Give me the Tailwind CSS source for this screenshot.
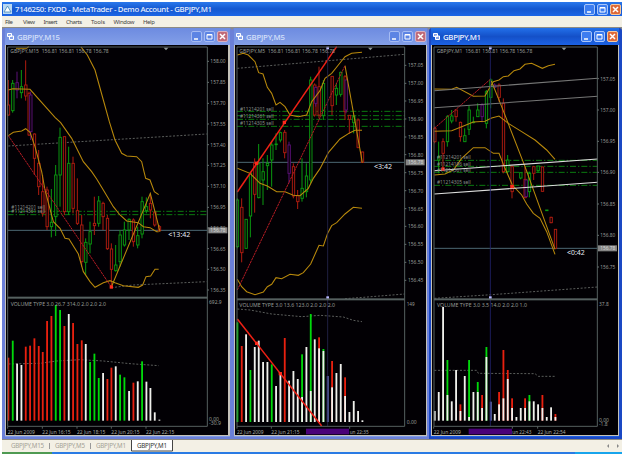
<!DOCTYPE html>
<html lang="en">

<head>
	<meta charset="UTF-8">
	<meta name="viewport" content="width=device-width, initial-scale=1.0">
	<title>7146250: FXDD - MetaTrader</title>
	<script src="https://cdn.jsdelivr.net/npm/@tailwindcss/browser@4"></script>
</head>

<body class="h-[454px] w-[625px] overflow-hidden bg-white pt-[2px] pr-[3px] pl-[2px] font-['Noto_Sans','Liberation_Sans',sans-serif]">
	<div class="flex h-[452px] flex-col">
		<!-- title bar -->
		<header class="flex h-[14px] shrink-0 items-center bg-linear-to-b from-[#2a78ec] via-[#1457d0] to-[#1c66e6] pl-[1px]">
			<svg class="mr-[3px] h-[10px] w-[9px]" viewBox="0 0 9 10">
				<rect width="9" height="10" fill="#b9d8f2" />
				<path d="M1 8 4.500 2 8 8Z" fill="#fff" stroke="#3f86b8" stroke-width=".8" />
			</svg>
			<svg class="h-[14px] w-[210px]" viewBox="0 0 210 14">
				<text x="0" y="10" font-size="7.800" font-weight="500" fill="#e8f0ff" textLength="197" xml:space="preserve">7146250: FXDD - MetaTrader - Demo Account - GBPJPY,M1</text>
			</svg>
			<div class="mr-[1px] ml-auto flex gap-[2px]">
				<svg class="size-[11px]" viewBox="0 0 11 11"><rect x=".5" y=".5" width="10" height="10" rx="1.500" fill="#3d7df0" stroke="#a9c6fa" /><path d="M3 8h4" stroke="#fff" stroke-width="1.500" /></svg>
				<svg class="size-[11px]" viewBox="0 0 11 11"><rect x=".5" y=".5" width="10" height="10" rx="1.500" fill="#3d7df0" stroke="#a9c6fa" /><path d="M3 3.500h5v4.500h-5zM3 4h5" fill="none" stroke="#fff" /></svg>
				<svg class="size-[11px]" viewBox="0 0 11 11"><rect x=".5" y=".5" width="10" height="10" rx="1.500" fill="#de6a38" stroke="#f3c9a0" /><path d="M3 3l5 5M8 3l-5 5" stroke="#fff" stroke-width="1.500" /></svg>
			</div>
		</header>
		<!-- menu -->
		<nav class="h-[11px] shrink-0 bg-[#f3f0e5]">
			<svg class="h-[11px] w-[200px] fill-[#444]" viewBox="2 16 200 11" font-size="6">
				<text x="5" y="23.500" textLength="8">File</text>
				<text x="23" y="23.500" textLength="12">View</text>
				<text x="43.500" y="23.500" textLength="14">Insert</text>
				<text x="66" y="23.500" textLength="16">Charts</text>
				<text x="91" y="23.500" textLength="14">Tools</text>
				<text x="113.500" y="23.500" textLength="21">Window</text>
				<text x="143" y="23.500" textLength="12">Help</text>
			</svg>
		</nav>
		<!-- chart windows -->
		<main class="flex h-[413px] shrink-0 border-t border-b border-[#8c8a84] bg-[#8c8a84]">
			<section class="flex w-[230px] flex-col rounded-t-[3px] border-r-[2px] border-b-[2px] border-l-[3px] border-[#6b80d8] bg-[#7e99e4] pb-px">
				<div class="flex h-[17px] shrink-0 items-center bg-linear-to-b from-[#6d8be0] to-[#839fe8] pl-[2px]">
					<svg class="mr-[3px] size-[7px]" viewBox="0 0 7 7"><path d="M.5.5h4v3h-4zM2.500 3h4v3.500h-4z" fill="#8aa4e8" stroke="#fff" /></svg>
					<svg class="h-[14px] w-[60px]" viewBox="0 0 60 14"><text y="10" font-size="7.800" font-weight="500" fill="#d6e0fa" textLength="43">GBPJPY,M15</text></svg>
					<div class="mr-[2px] ml-auto flex gap-[2px]">
						<svg class="size-[11px]" viewBox="0 0 11 11"><rect x=".5" y=".5" width="10" height="10" rx="1.500" fill="#5c84e4" stroke="#a5bbf2" /><path d="M3 8h4" stroke="#fff" stroke-width="1.500" /></svg>
						<svg class="size-[11px]" viewBox="0 0 11 11"><rect x=".5" y=".5" width="10" height="10" rx="1.500" fill="#5c84e4" stroke="#a5bbf2" /><path d="M3 3.500h5v4.500h-5zM3 4h5" fill="none" stroke="#fff" /></svg>
						<svg class="size-[11px]" viewBox="0 0 11 11"><rect x=".5" y=".5" width="10" height="10" rx="1.500" fill="#c06a78" stroke="#d9b0c0" /><path d="M3 3l5 5M8 3l-5 5" stroke="#fff" stroke-width="1.500" /></svg>
					</div>
				</div>
				<div class="min-h-0 grow border-r-[2px] border-b border-l border-[#c4c2ba]">
					<svg id="m15" class="h-full w-full bg-[#020004]" viewBox="18 135 666 1170" preserveAspectRatio="none"></svg>
				</div>
			</section>
			<section class="flex w-[197px] flex-col rounded-t-[3px] border-x-[2px] border-b-[2px] border-[#6b80d8] bg-[#7e99e4] pb-px">
				<div class="flex h-[17px] shrink-0 items-center bg-linear-to-b from-[#6d8be0] to-[#839fe8] pl-[2px]">
					<svg class="mr-[3px] size-[7px]" viewBox="0 0 7 7"><path d="M.5.5h4v3h-4zM2.500 3h4v3.500h-4z" fill="#8aa4e8" stroke="#fff" /></svg>
					<svg class="h-[14px] w-[60px]" viewBox="0 0 60 14"><text y="10" font-size="7.800" font-weight="500" fill="#d6e0fa" textLength="39">GBPJPY,M5</text></svg>
					<div class="mr-px ml-auto flex gap-[2px]">
						<svg class="size-[11px]" viewBox="0 0 11 11"><rect x=".5" y=".5" width="10" height="10" rx="1.500" fill="#5c84e4" stroke="#a5bbf2" /><path d="M3 8h4" stroke="#fff" stroke-width="1.500" /></svg>
						<svg class="size-[11px]" viewBox="0 0 11 11"><rect x=".5" y=".5" width="10" height="10" rx="1.500" fill="#5c84e4" stroke="#a5bbf2" /><path d="M3 3.500h5v4.500h-5zM3 4h5" fill="none" stroke="#fff" /></svg>
						<svg class="size-[11px]" viewBox="0 0 11 11"><rect x=".5" y=".5" width="10" height="10" rx="1.500" fill="#c06a78" stroke="#d9b0c0" /><path d="M3 3l5 5M8 3l-5 5" stroke="#fff" stroke-width="1.500" /></svg>
					</div>
				</div>
				<div class="min-h-0 grow border-x border-b border-[#c4c2ba]">
					<svg id="m5" class="h-full w-full bg-[#020004]" viewBox="15 135 573 1170" preserveAspectRatio="none"></svg>
				</div>
			</section>
			<section class="flex w-[193px] flex-col rounded-t-[3px] border-r-[3px] border-b-[2px] border-l-[2px] border-[#1a48c4] bg-[#1c5ce0] pb-px">
				<div class="flex h-[17px] shrink-0 items-center bg-linear-to-b from-[#2370ea] via-[#1450c8] to-[#1c62e4] pl-[2px]">
					<svg class="mr-[3px] size-[7px]" viewBox="0 0 7 7"><path d="M.5.5h4v3h-4zM2.500 3h4v3.500h-4z" fill="#8aa4e8" stroke="#fff" /></svg>
					<svg class="h-[14px] w-[60px]" viewBox="0 0 60 14"><text y="10" font-size="7.800" font-weight="500" fill="#f2f6ff" textLength="38">GBPJPY,M1</text></svg>
					<div class="mr-px ml-auto flex gap-[2px]">
						<svg class="size-[11px]" viewBox="0 0 11 11"><rect x=".5" y=".5" width="10" height="10" rx="1.500" fill="#3d7df0" stroke="#a9c6fa" /><path d="M3 8h4" stroke="#fff" stroke-width="1.500" /></svg>
						<svg class="size-[11px]" viewBox="0 0 11 11"><rect x=".5" y=".5" width="10" height="10" rx="1.500" fill="#3d7df0" stroke="#a9c6fa" /><path d="M3 3.500h5v4.500h-5zM3 4h5" fill="none" stroke="#fff" /></svg>
						<svg class="size-[11px]" viewBox="0 0 11 11"><rect x=".5" y=".5" width="10" height="10" rx="1.500" fill="#de6a38" stroke="#f3c9a0" /><path d="M3 3l5 5M8 3l-5 5" stroke="#fff" stroke-width="1.500" /></svg>
					</div>
				</div>
				<div class="min-h-0 grow border-x border-b border-[#c4c2ba]">
					<svg id="m1" class="h-full w-full bg-[#020004]" viewBox="21 135 558 1170" preserveAspectRatio="none"></svg>
				</div>
			</section>
		</main>
		<!-- tabs -->
		<footer class="h-[12px] shrink-0 bg-[#f3f0e5]">
			<svg class="h-[12px] w-full" viewBox="2 440 620 12" font-size="6.200">
				<path d="M49.500 443v6M90.500 443v6" stroke="#999" />
				<path d="M131.500 440v11h41v-11" fill="#fff" stroke="#444" />
				<g fill="#a3a196">
					<text x="11" y="448" textLength="33">GBPJPY,M15</text>
					<text x="55" y="448" textLength="30">GBPJPY,M5</text>
					<text x="96" y="448" textLength="30">GBPJPY,M1</text>
				</g>
				<text x="137" y="448" textLength="30" fill="#333">GBPJPY,M1</text>
				<path d="M609 444l-2 2 2 2zM617 444l2 2-2 2z" fill="#888" />
			</svg>
		</footer>
		<div class="flex h-[2px]">
			<div class="w-[50px] bg-[#4f9a52]"></div>
			<div class="w-[523px] bg-[#2a7be4]"></div>
			<div class="grow bg-[#18a5ec]"></div>
		</div>
	</div>

	<script>
		// chart units are thirds of a pixel
		const C = { r: '#b01c10', g: '#0a9a10', p: '#5c1078' }
		const V = { r: '#e8200f', g: '#00d80a', w: '#f0f0ec', b: '#7080d0' }
		const YELLOW = '#b8880c'

		const charts = {
			m15: {
				l: 23, r: 622, w: 684, div: 894, base: 1262, price: 691, priceX: 625,
				head: ['GBPJPY,M15  156.81 156.81 156.78 156.78', 31, 154, 295],
				vol: ['VOLUME TYPE 3.0 26.7 314.0 2.0 2.0 2.0', 32, 912, 286],
				tri: 498, timer: ['<13:42', 505, 703, 66],
				axisX: 631, axisW: 46,
				axis: [['158.00', 184], ['157.85', 247], ['157.70', 310], ['157.55', 372], ['157.40', 434], ['157.25', 496], ['157.10', 559], ['156.95', 622], ['156.80', 684], ['156.65', 746], ['156.50', 808], ['156.35', 870]],
				volAxis: [['692.9', 906, 38], ['0.00', 1258, 30], ['-30.9', 1270, 36]],
				dates: [['22 Jun 2009', 23, 82], ['22 Jun 16:15', 127, 85], ['22 Jun 18:15', 231, 85], ['22 Jun 20:15', 334, 85], ['22 Jun 22:15', 438, 85]],
				orders: [634, 644],
				labels: [['#11214201 sell', 34, 622], ['#11214361 sell', 34, 634]],
				candles: [[25, 240, 347, 315, 345, 'r'], [38, 240, 338, 250, 332, 'g'], [51, 215, 295, 248, 270, 'p'], [64, 210, 295, 260, 278, 'g'], [77, 181, 302, 255, 288, 'r'], [87, 275, 408, 280, 405, 'r'], [92, 275, 420, 285, 395, 'p'], [103, 400, 525, 402, 475, 'r'], [116, 450, 585, 490, 560, 'r'], [128, 525, 650, 575, 640, 'r'], [141, 560, 690, 570, 680, 'r'], [154, 567, 712, 667, 680, 'g'], [167, 495, 708, 525, 650, 'g'], [180, 383, 620, 412, 525, 'g'], [193, 410, 645, 410, 635, 'r'], [206, 440, 645, 490, 635, 'g'], [219, 470, 640, 490, 625, 'r'], [232, 535, 675, 632, 670, 'r'], [245, 645, 800, 675, 785, 'r'], [257, 715, 825, 727, 787, 'g'], [270, 665, 760, 695, 732, 'g'], [283, 590, 705, 670, 677, 'r'], [296, 588, 680, 603, 670, 'g'], [309, 605, 690, 610, 650, 'r'], [322, 645, 750, 655, 746, 'r'], [334, 730, 855, 747, 808, 'r'], [347, 735, 815, 795, 812, 'g'], [360, 690, 800, 705, 785, 'g'], [373, 665, 740, 690, 735, 'g'], [387, 655, 720, 658, 690, 'g'], [400, 655, 740, 660, 725, 'r'], [413, 680, 745, 707, 735, 'g'], [426, 590, 715, 605, 702, 'g'], [439, 592, 640, 620, 632, 'g'], [451, 580, 655, 610, 630, 'r'], [464, 635, 680, 636, 675, 'r'], [478, 675, 695, 680, 692, 'r']],
				bands: ['48,145 80,145 86,140', '243,141 262,165 285,210 310,300 328,365 345,420 365,460 380,468 410,470 425,485 432,515 437,535 450,540 463,575 476,584', '25,270 38,266 90,268 165,352 182,368 215,415 250,485 275,515 290,537 310,570 340,620 360,645 380,663 415,668 430,680 450,683 470,695 476,695', '25,407 40,397 65,393 77,386 90,397 105,440 125,515 135,570 160,665 180,685 195,715 207,717 235,762 250,815 270,845 285,862 310,848 330,842 345,848 370,857 415,862 428,855 438,830 452,828 465,808 476,808', '334,861 451,580 480,695'],
				red: ['25,407 334,861'], line: [], white: [],
				dash: ['25,438 620,402', '334,863 400,855 620,845', '25,1092 120,1090 170,1083 240,1079 310,1083 390,1091 476,1097'],
				dots: [[334, 861]],
				bars: [[25, 188, 'r'], [38, 137, 'g'], [51, 206, 'w'], [64, 210, 'w'], [77, 155, 'r'], [90, 152, 'r'], [103, 130, 'r'], [116, 153, 'r'], [128, 171, 'r'], [141, 78, 'r'], [154, 63, 'r'], [167, 30, 'g'], [180, 45, 'g'], [193, 93, 'r'], [206, 57, 'w'], [219, 84, 'r'], [232, 147, 'r'], [245, 136, 'r'], [257, 147, 'w'], [270, 201, 'g'], [283, 176, 'g'], [296, 249, 'g'], [309, 234, 'w'], [322, 252, 'r'], [334, 218, 'r'], [347, 214, 'w'], [360, 239, 'g'], [373, 247, 'g'], [387, 288, 'w'], [400, 263, 'r'], [413, 259, 'w'], [426, 199, 'g'], [439, 260, 'w'], [451, 279, 'w'], [464, 352, 'w'], [478, 374, 'w']]
			},
			m5: {
				l: 21, r: 524, w: 588, div: 899, base: 1266, price: 487, priceX: 527, cross: 293,
				head: ['GBPJPY,M5  156.81 156.81 156.78 156.78', 28, 154, 287],
				vol: ['VOLUME TYPE 3.0 13.6 123.0 2.0 2.0 2.0', 28, 916, 287],
				tri: 421, timer: ['<3:42', 432, 500, 54],
				axisX: 534, axisW: 46,
				axis: [['157.05', 196], ['157.00', 250], ['156.95', 303], ['156.90', 357], ['156.85', 411], ['156.80', 464], ['156.75', 518], ['156.70', 572], ['156.65', 626], ['156.60', 679], ['156.55', 733], ['156.50', 787], ['156.45', 841]],
				volAxis: [['149', 911, 24], ['0.00', 1267, 30]],
				dates: [['22 Jun 2009', 21, 80], ['22 Jun 21:15', 124, 85], ['un 22:35', 359, 57]],
				mark: [228, 129],
				orders: [334, 347, 358, 379],
				labels: [['#11214201 sell', 30, 326], ['#11214361 sell', 30, 348], ['#11214305 sell', 30, 369]],
				candles: [[22, 595, 745, 600, 740, 'g'], [35, 595, 787, 622, 758, 'r'], [48, 657, 745, 658, 745, 'g'], [61, 515, 712, 520, 648, 'g'], [74, 475, 638, 490, 583, 'r'], [86, 432, 595, 490, 593, 'g'], [99, 475, 615, 515, 540, 'g'], [112, 465, 570, 490, 497, 'g'], [125, 425, 560, 435, 480, 'g'], [138, 400, 450, 432, 434, 'g'], [151, 395, 427, 398, 420, 'g'], [164, 390, 475, 397, 458, 'r'], [177, 425, 550, 435, 520, 'p'], [190, 490, 595, 500, 588, 'r'], [203, 570, 627, 587, 605, 'r'], [216, 475, 605, 565, 595, 'g'], [229, 490, 592, 528, 575, 'g'], [242, 230, 550, 240, 540, 'g'], [254, 250, 350, 255, 345, 'r'], [257, 260, 320, 262, 310, 'p'], [267, 200, 355, 260, 345, 'r'], [280, 240, 360, 250, 347, 'g'], [306, 228, 345, 229, 317, 'r'], [319, 250, 315, 265, 285, 'g'], [332, 215, 290, 217, 283, 'g'], [345, 225, 360, 230, 335, 'r'], [348, 240, 340, 240, 330, 'p'], [358, 345, 402, 346, 358, 'r'], [371, 345, 400, 350, 368, 'g'], [384, 355, 445, 360, 442, 'r'], [397, 455, 488, 456, 487, 'r']],
				bands: ['22,165 40,160 55,165 75,185 86,218 99,222 112,262 125,280 138,315 150,307 165,320 180,345 205,350 230,345 245,305 270,272 285,235 305,220 325,195 345,170 365,160 396,157', '22,505 60,520 90,550 112,558 140,575 165,575 190,586 210,587 235,565 250,535 270,506 295,458 330,417 360,398 375,391 396,391', '22,838 35,860 50,875 75,884 100,876 112,860 125,853 138,833 155,836 180,823 205,826 220,818 242,792 267,736 280,738 293,700 305,677 320,668 345,642 370,622 396,625', '345,197 397,488'],
				red: ['22,870 345,197'], line: ['22,576 320,140', '22,957 275,1278'], white: [],
				dash: ['22,205 524,163', '345,896 400,892 524,882', '22,927 60,930 125,942 215,950 270,946 340,951 370,961 396,965'],
				dots: [[80, 490], [163, 367], [80, 1030], [151, 1121]],
				bars: [[22, 82, 'g'], [35, 153, 'r'], [48, 118, 'w'], [61, 225, 'g'], [74, 156, 'w'], [86, 137, 'w'], [99, 201, 'w'], [112, 201, 'w'], [125, 208, 'g'], [138, 273, 'w'], [151, 240, 'w'], [164, 129, 'r'], [177, 257, 'w'], [190, 228, 'w'], [203, 252, 'w'], [216, 178, 'g', 306], [229, 156, 'w'], [242, 57, 'g', 288], [254, 133, 'w'], [267, 127, 'r', 160], [280, 162, 'g', 168], [293, 243, 'b'], [306, 198, 'r', 277], [319, 234, 'w'], [332, 207, 'w'], [345, 247, 'r', 303], [358, 351, 'w'], [371, 318, 'w'], [384, 348, 'w'], [397, 376, 'w']]
			},
			m1: {
				l: 27, r: 517, w: 579, div: 899, base: 1262, price: 745, priceX: 519, cross: 196,
				head: ['GBPJPY,M1  156.81 156.81 156.78 156.78', 35, 154, 287],
				vol: ['VOLUME TYPE 3.0 3.5 14.0 2.0 2.0 1.0', 36, 916, 270],
				tri: 417, timer: ['<0:42', 426, 756, 53],
				axisX: 526, axisW: 45,
				axis: [['157.05', 236], ['157.00', 330], ['156.95', 424], ['156.90', 517], ['156.85', 612], ['156.80', 706], ['156.75', 801]],
				volAxis: [['37.8', 912, 29], ['0.00', 1259, 30], ['-1.8', 1271, 26]],
				dates: [['22 Jun 2009', 26, 82], ['un 22:43', 262, 57], ['22 Jun 22:54', 338, 84]],
				mark: [131, 130],
				orders: [481, 499, 517, 556],
				labels: [['#11214201 sell', 36, 472], ['#11214196 sell', 36, 492], ['#11214361 sell', 36, 511], ['#11214305 sell', 36, 547]],
				candles: [[29, 380, 430, 385, 425, 'r'], [41, 425, 520, 470, 480, 'g'], [54, 415, 510, 425, 460, 'r'], [67, 345, 440, 350, 425, 'g'], [80, 330, 370, 348, 363, 'g'], [93, 330, 365, 330, 350, 'r'], [106, 365, 425, 367, 410, 'r'], [119, 385, 425, 407, 425, 'g'], [132, 315, 405, 330, 388, 'g'], [145, 350, 370, 366, 368, 'g'], [158, 310, 350, 330, 350, 'g'], [171, 310, 367, 315, 350, 'p'], [184, 270, 385, 275, 370, 'g'], [197, 235, 325, 240, 292, 'g'], [209, 250, 265, 255, 262, 'p'], [222, 250, 305, 255, 292, 'r'], [235, 295, 520, 310, 515, 'r'], [248, 465, 520, 480, 515, 'g'], [261, 500, 595, 500, 575, 'r'], [287, 518, 538, 518, 534, 'g'], [300, 500, 595, 538, 593, 'r'], [303, 540, 590, 540, 590, 'p'], [313, 515, 592, 520, 575, 'g'], [326, 500, 540, 500, 520, 'r'], [339, 498, 518, 498, 512, 'g'], [352, 500, 575, 501, 574, 'r'], [365, 630, 633, 630, 632, 'g'], [378, 650, 670, 652, 668, 'r'], [391, 688, 745, 688, 745, 'r']],
				bands: ['28,267 80,268 95,262 145,289 180,288 190,270 205,245 222,240 235,230 250,228 267,212 285,207 300,193 320,190 352,205 370,197 390,193', '28,394 80,392 110,380 145,366 180,364 200,354 222,348 250,370 290,395 330,420 365,450 390,478', '28,525 60,522 85,510 110,475 145,443 180,443 205,460 222,460 240,505 262,555 290,585 305,612 325,640 345,655 365,695 390,763', '199,243 230,320 300,500 390,748'],
				red: ['28,385 197,237'], line: [],
				white: [['28,272 518,235', '#777'], ['28,323 518,289', '#777'], ['28,512 518,477', '#ddd'], ['28,582 518,547', '#ddd']],
				dash: ['28,895 200,884 518,861', '28,1111 155,1111 160,1120 330,1121 340,1129 391,1129'],
				dots: [[54, 507], [261, 560]],
				bars: [[29, 348, 'w'], [41, 291, 'w'], [54, 36, 'w'], [67, 195, 'g', 300], [80, 319, 'w'], [93, 225, 'w'], [106, 328, 'r', 348], [119, 243, 'w'], [132, 195, 'g', 366], [145, 291, 'w'], [158, 261, 'g', 291], [171, 300, 'r', 339], [184, 156, 'g', 186], [197, 320, 'b'], [209, 357, 'w'], [222, 291, 'r', 328], [235, 165, 'r', 310], [248, 225, 'r', 252], [261, 310, 'r', 339], [274, 366, 'w'], [287, 339, 'w'], [300, 310, 'r', 339], [313, 300, 'g', 319], [326, 319, 'w'], [339, 328, 'w'], [352, 300, 'r', 339], [365, 366, 'w'], [378, 337, 'w'], [391, 357, 'r', 366]]
			}
		}

		const text = (s, x, y, w, fill = '#979c97', size = 16) =>
			`<text x="${x}" y="${y + size * .36}" textLength="${w}" lengthAdjust="spacingAndGlyphs" font-size="${size}" fill="${fill}" xml:space="preserve">${s.replace('<', '&lt;')}</text>`
		const poly = (pts, stroke, width = 3, extra = '') =>
			`<polyline points="${pts}" fill="none" stroke="${stroke}" stroke-width="${width}" ${extra}/>`
		const rect = (x, y, w, h, fill) => `<rect x="${x}" y="${y}" width="${w}" height="${h}" fill="${fill}"/>`

		function draw(id) {
			const c = charts[id]
			let s = ''
			c.orders.forEach(y => s += poly(`${c.l},${y} ${c.r},${y}`, '#0b7a10', 3, 'stroke-dasharray="18 6 4 6"'))
			s += poly(`${c.l},${c.price} ${c.r},${c.price}`, '#4c6874')
			c.dash.forEach(p => s += poly(p, '#6c706c', 2.5, 'stroke-dasharray="6 5"'))
			c.candles.forEach(([x, hi, lo, top, bot, k]) => {
				s += poly(`${x},${hi} ${x},${lo}`, C[k])
				s += `<rect x="${x - 3}" y="${top}" width="7" height="${bot - top}" fill="#060206" stroke="${C[k]}" stroke-width="2.8"/>`
			})
			c.bars.forEach(([x, top, k, split]) => {
				s += rect(x - 2.5, top + 885, 5.5, c.base - top - 885, V[k])
				if (split) s += rect(x - 2.5, split + 885, 5.5, c.base - split - 885, V.w)
			})
			c.bands.forEach(p => s += poly(p, YELLOW, 3.2))
			c.red.forEach(p => s += poly(p, '#b81c24', 3, 'stroke-dasharray="7 2"'))
			c.white.forEach(([p, col]) => s += poly(p, col, 3.2))
			c.line.forEach(p => s += poly(p, '#ee2015', 4.5))
			c.dots.forEach(([x, y]) => s += rect(x - 5, y - 5, 10, 10, '#ff2a1c'))
			if (c.cross) {
				s += poly(`${c.cross},141 ${c.cross},1278`, id == 'm1' ? '#22226e' : '#25254e', 2.5)
				s += rect(c.cross - 4, 140, 8, 8, '#b8b8ff') + rect(c.cross - 4, 889, 8, 8, '#b8b8ff')
			}
			// frame
			s += poly(`${c.l},1279 ${c.l},141 ${c.r},141 ${c.r},1279 ${c.l},1279`, '#566060')
			s += rect(c.l, c.div - 4, c.r - c.l, 6, '#566060')
			s += `<path d="M${c.tri - 7} 143h14l-7 8z" fill="#8f9898"/>`
			// scales
			c.axis.forEach(([t, y]) => {
				s += poly(`${c.r},${y} ${c.r + 5},${y}`, '#667070')
				s += text(t, c.axisX, y, c.axisW)
			})
			c.volAxis.forEach(([t, y, w]) => s += text(t, c.axisX - 4, y, w))
			s += rect(c.priceX, c.price - 9, 57, 18, '#858585') + text('156.78', c.axisX, c.price, c.axisW, '#d8d8d8')
			c.dates.forEach(([t, x, w]) => {
				s += poly(`${x},1279 ${x},1286`, '#566060')
				s += text(t, x, 1295, w, '#a8aca8')
			})
			if (c.mark) s += rect(c.mark[0], 1286, c.mark[1], 17, '#4a0078')
			c.labels.forEach(([t, x, y]) => s += text(t, x, y, 101, '#8a908a'))
			s += text(...c.head) + text(...c.vol)
			s += text(...c.timer, '#e4eaf2', 21)
			document.getElementById(id).innerHTML = s
		}
		Object.keys(charts).forEach(draw)
	</script>
</body>

</html>
